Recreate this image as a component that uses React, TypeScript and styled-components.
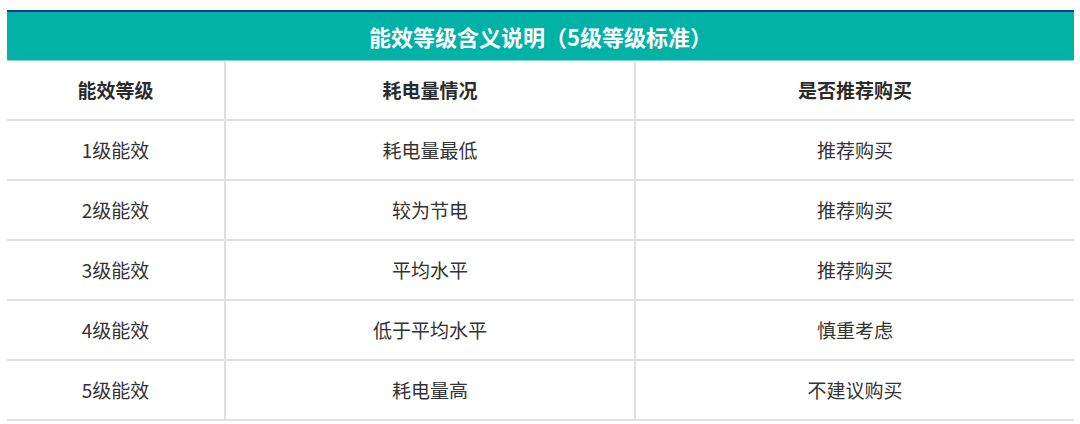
import styled, { createGlobalStyle } from "styled-components";

const GlobalStyle = createGlobalStyle`
  html, body {
    margin: 0;
    padding: 0;
    background: #ffffff;
  }
  body {
    font-family: "Noto Sans CJK SC", "Noto Sans", sans-serif;
  }
`;

const Page = styled.div`
  padding: 10px 6px 0 7px;
  width: 1067px;
`;

const TitleBar = styled.div`
  height: 48px;
  border-top: 2px solid #0b3f9c;
  border-bottom: 1px solid #86dcd5;
  background: #02b2a7;
  color: #ffffff;
  font-size: 22px;
  font-weight: 700;
  display: flex;
  align-items: center;
  justify-content: center;
  padding-bottom: 1px;
  box-sizing: border-box;
  height: 51px;
`;

const Row = styled.div`
  display: grid;
  grid-template-columns: 219px 410px 1fr;
  height: 60px;
  box-sizing: border-box;
  border-bottom: 2px solid #e0e0e0;
`;

const Cell = styled.div<{ $head?: boolean; $last?: boolean }>`
  display: flex;
  align-items: center;
  justify-content: center;
  border-right: ${(p) => (p.$last ? "none" : "2px solid #e0e0e0")};
  color: ${(p) => (p.$head ? "#2b2b2b" : "#333333")};
  font-size: 19px;
  font-weight: ${(p) => (p.$head ? 700 : 400)};
  padding-bottom: 2px;
`;

const rows = [
  ["1级能效", "耗电量最低", "推荐购买"],
  ["2级能效", "较为节电", "推荐购买"],
  ["3级能效", "平均水平", "推荐购买"],
  ["4级能效", "低于平均水平", "慎重考虑"],
  ["5级能效", "耗电量高", "不建议购买"],
];

export default function App() {
  return (
    <>
      <GlobalStyle />
      <Page>
        <TitleBar>能效等级含义说明（5级等级标准）</TitleBar>
        <Row>
          <Cell $head>能效等级</Cell>
          <Cell $head>耗电量情况</Cell>
          <Cell $head $last>是否推荐购买</Cell>
        </Row>
        {rows.map((r) => (
          <Row key={r[0]}>
            <Cell>{r[0]}</Cell>
            <Cell>{r[1]}</Cell>
            <Cell $last>{r[2]}</Cell>
          </Row>
        ))}
      </Page>
    </>
  );
}
